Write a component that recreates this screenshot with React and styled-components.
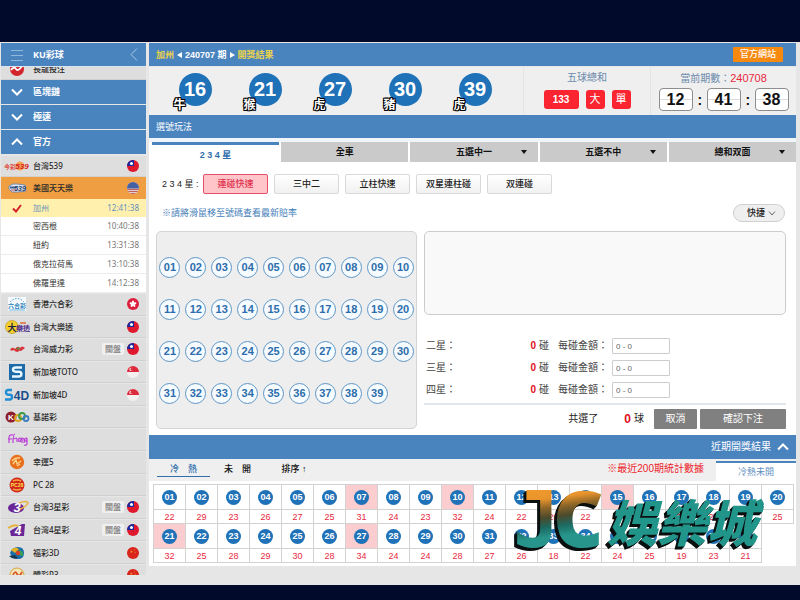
import React from "react";
import styled, { createGlobalStyle, css } from "styled-components";

const BLUE = "#4a84bf";
const DEEP = "#1f72b8";
const RED = "#e8283c";
const CJK = '"Noto Sans CJK TC", sans-serif';

const GlobalStyle = createGlobalStyle`
  * { box-sizing: border-box; }
  body {
    margin: 0;
    background: #020a2c;
    color: #222;
    font: 9px/12px "Liberation Sans", ${CJK};
  }
  button, input, select { font: inherit; color: inherit; margin: 0; }
  button { padding: 0; border: 0; background: none; cursor: pointer; }
  a { color: inherit; text-decoration: none; }
`;

const Shell = styled.div`
  min-height: 100vh;
  display: grid;
  grid-template-columns: 146px minmax(0, 1fr);
  column-gap: 3px;
  padding: 0 4px 0 0;
  border: solid #020a2c;
  border-width: 42px 0 15px;
  background: #e6e6e6;
  overflow: hidden;
`;

/* ---------- Sidebar ---------- */

const Sidebar = styled.nav`
  display: flex;
  flex-direction: column;
  padding: 1px 0 10px 1px;
  font: 8px/12px "Noto Sans", ${CJK};
`;

const SideHeader = styled.header`
  height: 24px;
  display: grid;
  grid-template-columns: 32px 1fr 24px;
  align-items: center;
  background: ${BLUE};
  border-bottom: 1px solid #d8e4f0;
  color: #fff;
  font-size: 9px;
  font-weight: 700;
`;

const IconButton = styled.button`
  display: flex;
  justify-content: center;
  align-items: center;
`;

const ClippedRow = styled.div`
  height: 13px;
  display: flex;
  align-items: flex-end;
  overflow: hidden;
`;

const Section = styled.button`
  height: 24px;
  margin-bottom: 1px;
  flex: none;
  display: grid;
  grid-template-columns: 32px 1fr;
  align-items: center;
  background: ${BLUE};
  color: #fff;
  font-size: 9px;
  font-weight: 700;
  text-align: left;
  & > svg { justify-self: center; }
`;

const GameLink = styled.a`
  flex: ${(p) => (p.$fluid ? "1 1 22px" : "0 0 22px")};
  display: grid;
  grid-template-columns: 32px 1fr auto 12px;
  align-items: center;
  padding-right: 7px;
  background: ${(p) => (p.$active ? "#ef9f41" : "#dedede")};
  border-bottom: 1px solid ${(p) => (p.$active ? "#ef9f41" : "#d0d0d0")};
  border-top: 1px solid ${(p) => (p.$active ? "#ef9f41" : "#e6e6e6")};
  color: #2a2a2a;
  font-weight: 500;
  white-space: nowrap;
  & > svg:first-child { justify-self: center; }
  ${ClippedRow} & { flex: 1 0 100%; height: 22px; }
`;

const Closed = styled.span`
  grid-column: 3;
  width: 22px;
  margin-right: 3px;
  border-radius: 2px;
  background: #efefef;
  color: #777;
  text-align: center;
`;

const FlagCell = styled.span`
  grid-column: 4;
  display: flex;
`;

const RegionLink = styled.a`
  flex: none;
  height: ${(p) => (p.$active ? 18 : 19)}px;
  display: grid;
  grid-template-columns: 32px 1fr auto;
  align-items: center;
  padding-right: 7px;
  background: ${(p) => (p.$active ? "#fff0ad" : "#fff")};
  border-bottom: ${(p) => (p.$active ? "0" : "1px solid #ececec")};
  color: ${(p) => (p.$active ? "#5f91bd" : "#333")};
  & > svg { justify-self: center; }
  & > span { grid-column: 2; }
`;

const Clock = styled.time`
  color: ${(p) => (p.$active ? "#5f91bd" : "#777")};
`;

const GameList = styled.div`
  flex: 1 1 0;
  display: flex;
  flex-direction: column;
  overflow: hidden;
`;

const LastRow = styled.div`
  flex: 0 0 11px;
  display: flex;
  flex-direction: column;
  overflow: hidden;
`;

/* ---------- Main column ---------- */

const Main = styled.main`
  min-width: 0;
  padding-top: 1px;
`;

const Bar = styled.div`
  height: 23px;
  display: flex;
  align-items: center;
  padding: 0 7px;
  background: ${BLUE};
  color: #fff;
`;

const DrawBar = styled(Bar)`
  margin-bottom: 1px;
  gap: 3px;
  padding-right: 13px;
  font-weight: 700;
`;

const Gold = styled.span`
  color: #ead24c;
`;

const StepButton = styled.button`
  width: 5px;
  height: 12px;
  display: flex;
  align-items: center;
`;

const OfficialLink = styled.a`
  margin-left: auto;
  padding: 1px 7px 2px;
  background: #f7890f;
  border-radius: 1px;
  font-weight: 500;
`;

const Results = styled.section`
  height: 48px;
  display: grid;
  grid-template-columns: 374fr 127fr 146fr;
  background: #efefef;
`;

const Draw = styled.div`
  display: flex;
  padding: 6px 13px 0 11px;
`;

const DrawSlot = styled.div`
  flex: 1;
  display: flex;
  justify-content: center;
`;

const DrawBall = styled.div`
  position: relative;
  width: 33px;
  height: 33px;
  border-radius: 50%;
  background: ${DEEP};
  color: #fff;
  font-size: 20px;
  line-height: 33px;
  font-weight: 700;
  text-align: center;
`;

const Zodiac = styled.span`
  position: absolute;
  left: -5px;
  bottom: -5px;
  color: #fff;
  font: 700 12px/14px ${CJK};
  text-shadow: 1px 0 #000, -1px 0 #000, 0 1px #000, 0 -1px #000, 1px 1px #000,
    -1px -1px #000, 1px -1px #000, -1px 1px #000;
`;

const InfoCell = styled.div`
  border-left: 1px solid #e4e4e4;
  padding-top: 4px;
  display: flex;
  flex-direction: column;
  align-items: center;
  gap: ${(p) => p.$gap}px;
  color: #6c8aab;
  font-size: 10px;
  line-height: 14px;
`;

const Line = styled.div`
  display: flex;
  align-items: center;
  gap: ${(p) => p.$gap}px;
`;

const SumTag = styled.span`
  width: ${(p) => (p.$wide ? 35 : 19)}px;
  height: 19px;
  border-radius: 3px;
  background: #fb2531;
  color: #fff;
  font-size: ${(p) => (p.$wide ? 10 : 11)}px;
  line-height: 19px;
  font-weight: ${(p) => (p.$wide ? 700 : 400)};
  text-align: center;
`;

const Issue = styled.span`
  color: ${RED};
  font-size: 11px;
`;

const TimeBox = styled.span`
  width: 34px;
  height: 23px;
  border: 1px solid #8d8d8d;
  border-radius: 4px;
  background: linear-gradient(#fff 10px, #ddd 10px, #ddd 11px, #fff 11px);
  color: #111;
  font-size: 16px;
  line-height: 22px;
  font-weight: 700;
  text-align: center;
`;

const Colon = styled.span`
  width: 4px;
  color: #111;
  font-size: 14px;
  font-weight: 700;
`;

const Play = styled.section`
  border-top: 4px solid #eff5f8;
  background: #fff;
`;

const Tabs = styled.div`
  display: grid;
  grid-template-columns: repeat(5, 1fr);
  column-gap: 2px;
  padding-left: 3px;
  font-weight: 700;
`;

const tabFace = css`
  width: 100%;
  height: 20px;
  background: #cacaca;
  color: #111;
`;

const Tab = styled.button`
  ${tabFace}
  ${(p) =>
    p.$active &&
    css`
      background: #fff;
      border-top: 3px solid ${BLUE};
      padding-top: 2px;
      color: #2f6fae;
    `}
`;

const TabMenu = styled.label`
  display: grid;
  align-items: center;
  & > * { grid-area: 1 / 1; }
  & > svg { justify-self: end; margin-right: 11px; pointer-events: none; }
`;

const TabSelect = styled.select`
  ${tabFace}
  appearance: none;
  border: 0;
  padding: 0;
  text-align: center;
  text-align-last: center;
`;

const Modes = styled.div`
  display: flex;
  align-items: center;
  gap: 6px;
  padding: 12px 10px 0 13px;
`;

const ModesLabel = styled.span`
  width: 35px;
  white-space: nowrap;
`;

const Mode = styled.button`
  width: 65px;
  height: 20px;
  border: 1px solid ${(p) => (p.$active ? "#e4506a" : "#d9d9d9")};
  border-radius: 2px;
  background: ${(p) => (p.$active ? "#ffc5c9" : "linear-gradient(#fff, #f1f1f1)")};
  color: ${(p) => (p.$active ? "#e0304c" : "#222")};
  font-weight: 500;
`;

const HintRow = styled.div`
  display: flex;
  justify-content: space-between;
  align-items: center;
  padding: 10px 11px 9px 13px;
  color: #3f7db8;
`;

const Quick = styled.label`
  width: 52px;
  display: grid;
  align-items: center;
  color: #222;
  & > * { grid-area: 1 / 1; }
  & > svg { justify-self: end; margin-right: 9px; pointer-events: none; }
`;

const QuickSelect = styled.select`
  appearance: none;
  height: 18px;
  padding: 0 0 0 13px;
  border: 1px solid #d0d0d0;
  border-radius: 9px;
  background: #efefef;
  font-weight: 500;
`;

const Boards = styled.div`
  display: grid;
  grid-template-columns: 261fr 362fr;
  column-gap: 7px;
  padding: 0 10px 6px 7px;
`;

const NumberBoard = styled.div`
  display: grid;
  grid-template-columns: repeat(10, 1fr);
  grid-auto-rows: 42px;
  place-items: center;
  padding: 14px 0;
  border: 1px solid #d4d4d4;
  border-radius: 5px;
  background: #eee;
`;

const NumberBall = styled.button`
  width: 21px;
  height: 21px;
  border: 1px solid #5f95c4;
  border-radius: 50%;
  background: #f5fbff;
  color: #2d6dab;
  font-size: 11px;
  line-height: 19px;
  font-weight: 700;
`;

const Slip = styled.form`
  display: flex;
  flex-direction: column;
  font-size: 10px;
  color: #444;
`;

const SlipBox = styled.div`
  height: 84px;
  margin-bottom: 20px;
  border: 1px solid #ccc;
  border-radius: 5px;
  background: #f9f9f9;
`;

const BetRow = styled.div`
  height: 22px;
  display: grid;
  grid-template-columns: 112px 16px 51px 58px;
  column-gap: 3px;
  align-items: center;
  white-space: nowrap;
`;

const StarCell = styled.span`
  display: flex;
  justify-content: space-between;
  padding-left: 2px;
`;

const Count = styled.b`
  color: #e0101c;
  font-size: ${(p) => (p.$big ? 12 : 10)}px;
`;

const Amount = styled.input`
  width: 58px;
  height: 16px;
  padding: 0 3px;
  border: 1px solid #ccc;
  border-radius: 1px;
  background: #fff;
  font-size: 8px;
  &::placeholder { color: #666; opacity: 1; }
`;

const SlipFooter = styled.div`
  display: flex;
  align-items: center;
  justify-content: flex-end;
  margin-top: 2px;
  padding-top: 4px;
  border-top: 2px solid #e2e6e8;
  gap: 3px;
  color: #222;
`;

const Picked = styled.span`
  margin-right: 23px;
`;

const Ball = styled.span`
  margin-right: 7px;
`;

const Action = styled.button`
  width: ${(p) => (p.$wide ? 86 : 43)}px;
  height: 20px;
  border-radius: 1px;
  background: #808080;
  color: #fff;
`;

const RecentBar = styled.button`
  width: 100%;
  height: 24px;
  display: flex;
  justify-content: flex-end;
  align-items: center;
  gap: 6px;
  padding-right: 7px;
  background: ${BLUE};
  color: #fff;
  font-size: 10px;
`;

const Stats = styled.section`
  background: #fff;
  padding-bottom: 3px;
`;

const StatsHead = styled.div`
  height: 22px;
  margin-bottom: 3px;
  display: flex;
  background: #efefef;
`;

const StatTab = styled.button`
  align-self: flex-start;
  width: ${(p) => p.$width}px;
  height: 18px;
  padding-top: 3px;
  margin-left: ${(p) => (p.$active ? 8 : 0)}px;
  border-bottom: 1px solid ${(p) => (p.$active ? "#2f6fae" : "transparent")};
  color: ${(p) => (p.$active ? "#2f6fae" : "#111")};
  font-weight: 500;
`;

const StatsNote = styled.span`
  margin: 4px 12px 0 auto;
  color: #ee1c2c;
  font-size: 10px;
`;

const ViewTab = styled.button`
  width: 80px;
  border-top: 2px solid ${BLUE};
  margin-top: 2px;
  background: #fff;
  color: #5f8fc0;
`;

const StatsTable = styled.table`
  width: calc(100% - 6px);
  margin: 0 2px 0 4px;
  border-collapse: collapse;
  table-layout: fixed;
  text-align: center;
  color: ${RED};
`;

const BallCell = styled.th`
  height: 25px;
  padding: 0;
  border: 1px solid #d2d2d2;
  background: ${(p) => (p.$hot ? "#fbcdce" : "#fff")};
`;

const CountCell = styled.td`
  height: 14px;
  padding: 0;
  border: 1px solid #d2d2d2;
`;

const SmallBall = styled.span`
  display: block;
  width: 15px;
  height: 15px;
  margin: 0 auto;
  border-radius: 50%;
  background: ${DEEP};
  color: #fff;
  line-height: 15px;
`;

const Watermark = styled.svg`
  position: absolute;
  left: 514px;
  top: 476px;
  width: 262px;
  height: 100px;
  pointer-events: none;
  & > text {
    filter: drop-shadow(-1px 1px 0 #0a0f10) drop-shadow(-2px 2px 0 #0a0f10);
  }
`;

/* ---------- Drawings ---------- */

const Chevron = ({ d, w = 12, h = 8, sw = 2, color = "#fff" }) => (
  <svg width={w} height={h} viewBox={`0 0 ${w} ${h}`} fill="none" stroke={color} strokeWidth={sw} aria-hidden="true">
    <path d={d} />
  </svg>
);
const Down = () => <Chevron d="M1 1.5 6 6.5 11 1.5" />;
const Up = () => <Chevron d="M1 6.5 6 1.5 11 6.5" />;

const Triangle = ({ d, w, h, color }) => (
  <svg width={w} height={h} viewBox={`0 0 ${w} ${h}`} aria-hidden="true"><path d={d} fill={color} /></svg>
);
const Caret = () => <Triangle w={6} h={4} d="M0 0h6L3 4z" color="#111" />;

const Flag = ({ code }) => {
  const id = React.useId();
  const star = "M0-1 .25-.3 1-.3 .4.15 .6.9 0 .45-.6.9-.4.15-1-.3-.25-.3z";
  const art = {
    tw: <><path fill="#e0182d" d="M0 0h12v12H0z" /><path fill="#1b2a9c" d="M0 0h7v6H0z" /><circle cx="4.5" cy="3.6" r="1.5" fill="#fff" /></>,
    us: <><path fill="#e6cdd0" d="M0 0h12v12H0z" /><path stroke="#c0605a" d="M0 7.5h12M0 9.5h12M0 11.500h12" /><path fill="#4660a4" d="M0 0h12v6.500H0z" /></>,
    hk: <><path fill="#dc1f3c" d="M0 0h12v12H0z" /><g fill="#fff">{[0, 72, 144, 216, 288].map((r) => <ellipse key={r} cx="6" cy="4.2" rx="1.1" ry="1.7" transform={`rotate(${r} 6 6)`} />)}</g></>,
    sg: <><path fill="#f4f0f0" d="M0 0h12v12H0z" /><path fill="#dc2a3c" d="M0 0h12v6H0z" /><circle cx="4" cy="3.4" r="1.6" fill="#fff" /><circle cx="4.8" cy="3.4" r="1.4" fill="#dc2a3c" /></>,
    cn: <><path fill="#d9251c" d="M0 0h12v12H0z" /><path d={star} fill="#f0a02a" transform="translate(4.4 4.6) scale(1.5)" /><circle cx="7.6" cy="3" r=".5" fill="#f0a02a" /><circle cx="8.2" cy="5.4" r=".5" fill="#f0a02a" /></>,
  };
  return (
    <svg width="12" height="12" viewBox="0 0 12 12" aria-hidden="true">
      <clipPath id={id}><circle cx="6" cy="6" r="6" /></clipPath>
      <g clipPath={`url(#${id})`}>{art[code]}</g>
    </svg>
  );
};

const logoText = { fontFamily: "Liberation Sans, Noto Sans CJK TC", fontWeight: 700, textAnchor: "middle" };
const logos = {
  dragon: <><circle cx="13" cy="8" r="7" fill="#d3262c" /><path d="M7 9q3-4 5-1t6-3" stroke="#fff" strokeWidth="1.8" fill="none" /></>,
  t539: <><text x="6" y="11" fontSize="6" fill="#e0483a" {...logoText}>今彩</text><circle cx="16" cy="8" r="4.500" fill="#f3a25a" /><text x="18" y="11" fontSize="8" fontStyle="italic" fill="#d8281f" {...logoText}>539</text></>,
  us539: <><path d="M5 6q4-3 8-2l8 1 1 6-8 1H8l-3-3z" fill="#dfe6f0" stroke="#5d7cab" strokeWidth=".8" /><path d="M6 6.500h6v2H6z" fill="#3b5c95" /><path d="M7 10h6" stroke="#c8555a" /><text x="16" y="11" fontSize="7" fontStyle="italic" fill="#27436e" {...logoText}>539</text></>,
  six: <><path fill="#f7fafc" d="M4 1h18v14H4z" /><path d="M6 6q7-7 14 0" fill="none" stroke="#3a8fc4" strokeDasharray="1.5 1.5" /><text x="13" y="12" fontSize="6" fill="#2d83bb" {...logoText}>六合彩</text><path d="M5 14h16" stroke="#6fb5db" /></>,
  lotto: <><circle cx="8" cy="8" r="6.5" fill="#f4cf2b" stroke="#b08d17" strokeWidth=".6" /><text x="8" y="12" fontSize="9" fill="#1c2440" {...logoText}>大</text><text x="19" y="12" fontSize="7" fill="#4a1f86" {...logoText}>樂透</text><path d="M16 4h6" stroke="#e06a30" strokeWidth="1.5" /></>,
  power: <><path d="M6 9q2-4 5-1 3-4 5-1 2-3 5 0l-4 3q-2-1-3 1-3 0-4-2-2 1-4 0z" fill="#d9343c" /><path d="M12 8l3-2 1 3z" fill="#4f9a45" /></>,
  toto: <><path fill="#1d6aa8" d="M5 0h16v16H5z" /><path d="M18 3.5h-6q-3 0-3 2t3 2.2h3q2.400 0 2.400 2.300t-2.400 2.500H8" fill="none" stroke="#e8f6ff" strokeWidth="2.400" /></>,
  s4d: <><path d="M8 3H4Q2 3 2 5.300T4 7.700h2q2 0 2 2.200T6 12.500H1" fill="none" stroke="#1f8fd6" strokeWidth="2.400" /><text x="17.500" y="12.500" fontSize="12" fill="#1b4f8c" {...logoText}>4D</text></>,
  keno: <><circle cx="7" cy="8" r="5.500" fill="#8d1f2d" /><text x="7" y="11" fontSize="8" fill="#fff" {...logoText}>K</text><circle cx="14" cy="9" r="3" fill="none" stroke="#e0a321" strokeWidth="1.800" /><circle cx="18" cy="7" r="3" fill="none" stroke="#3d9a4a" strokeWidth="1.800" /><circle cx="22" cy="9.500" r="2.500" fill="none" stroke="#3b7dc2" strokeWidth="1.800" /></>,
  ffc: <path d="M9 3q-4-1-4 3v5M4 7h4M11 2q-2 0-2 9M10 7q3-2 3 0v3M15 10q-1-4 1-4t0 4M18 11V6q3 0 2 5M23 6q-3 0-2 3 2 1 2-3v6q-1 2-3 1" fill="none" stroke="#b93fd6" strokeWidth="1.200" />,
  lucky: <><circle cx="13" cy="8" r="7.200" fill="#e8701d" /><path d="M8 7q3-4 8-3M9 10l3-4 1 4 4-3M13 12l3-2" stroke="#ffd48a" strokeWidth="1.300" fill="none" /></>,
  pc28: <><circle cx="13" cy="8" r="7.500" fill="#d0261d" /><path d="M9 4q4-2 8 0M9 12q4 2 8 0" stroke="#f5a33a" strokeWidth="1.500" fill="none" /><text x="13" y="10" fontSize="5" fill="#ffe24a" {...logoText}>PC28</text></>,
  star3: <><ellipse cx="12" cy="9" rx="8" ry="5" fill="#6a2596" /><path d="M15 4q8-3 9 0-2 4-8 6" fill="none" stroke="#e8b23e" strokeWidth="1.500" /><text x="13" y="12.500" fontSize="13" fontStyle="italic" fill="#fff" {...logoText}>3</text></>,
  star4: <><path d="M6 9 18 2h3l-1 12H7z" fill="#6a2596" /><path d="M4 6q8-5 11-1" fill="none" stroke="#e8b23e" strokeWidth="1.800" /><text x="14" y="13" fontSize="12" fontStyle="italic" fill="#fff" {...logoText}>4</text></>,
  fc3d: <><path d="M6 8q2-6 8-6t6 6-6 6-8-6z" fill="#1b6fa8" /><path d="M7 5q4-4 8-1l-4 4z" fill="#e5b21d" /><path d="M15 5q5 1 4 6l-5-1z" fill="#39a05a" /><path d="M5 11q4 4 9 2l-3-3z" fill="#153a5a" /><circle cx="14" cy="8" r="2.200" fill="#d9402a" /></>,
  p3: <><circle cx="13" cy="8" r="7" fill="#f2e6b8" stroke="#d3a53a" /><path d="M9 8q2-5 4-1t5-2" stroke="#d9582a" strokeWidth="1.800" fill="none" /></>,
};
const Logo = ({ name }) => (
  <svg width="26" height="16" viewBox="0 0 26 16" aria-hidden="true">{logos[name]}</svg>
);

const Brand = () => (
  <Watermark viewBox="0 0 262 100" role="img" aria-label="JC 娛樂城">
    <defs>
      <linearGradient id="jc" x1="0" y1="15" x2="8" y2="74" gradientUnits="userSpaceOnUse">
        <stop offset="0" stopColor="#f09a2c" />
        <stop offset=".2" stopColor="#e8942c" />
        <stop offset=".36" stopColor="#8a6428" />
        <stop offset=".52" stopColor="#4a4a2c" />
        <stop offset=".68" stopColor="#1c6a62" />
        <stop offset=".85" stopColor="#27958b" />
      </linearGradient>
    </defs>
    <text x="-1" y="71" fill="url(#jc)" fontFamily="DejaVu Sans Mono" fontWeight="700" fontSize="78">J</text>
    <text x="39" y="71" fill="url(#jc)" fontFamily="Open Sans" fontWeight="800" fontSize="78">C</text>
    <text x="93" y="66" fill="#22958b" fontFamily="Noto Sans CJK TC" fontWeight="900" fontSize="50" fontStyle="italic">
      娛樂城
    </text>
  </Watermark>
);

/* ---------- Data ---------- */

const regions = [
  ["加州", "12:41:38"], ["密西根", "10:40:38"], ["紐約", "13:31:38"],
  ["俄克拉荷馬", "13:10:38"], ["佛羅里達", "14:12:38"],
];
const games = [
  ["six", "香港六合彩", "hk"], ["lotto", "台灣大樂透", "tw"], ["power", "台灣威力彩", "tw", true],
  ["toto", "新加坡TOTO", "sg"], ["s4d", "新加坡4D", "sg"], ["keno", "基諾彩"], ["ffc", "分分彩"],
  ["lucky", "幸運5"], ["pc28", "PC 28"], ["star3", "台灣3星彩", "tw", true],
  ["star4", "台灣4星彩", "tw", true], ["fc3d", "福彩3D", "cn"],
];
const draws = [["16", "牛"], ["21", "猴"], ["27", "虎"], ["30", "豬"], ["39", "虎"]];
const modes = ["連碰快速", "三中二", "立柱快速", "双星連柱碰", "双連碰"];
const counts = [
  [22, 29, 23, 26, 27, 25, 31, 24, 23, 32, 24, 22, 20, 22, 31, 24, 27, 24, 22, 25],
  [32, 25, 28, 29, 30, 28, 34, 24, 24, 28, 27, 26, 18, 22, 24, 25, 19, 23, 21],
];
const hot = [7, 10, 15, 21, 27];
const pad = (n) => String(n).padStart(2, "0");

const Game = ({ logo, name, flag, closed, active, fluid }) => (
  <GameLink href="#" $active={active} $fluid={fluid}>
    <Logo name={logo} />
    <span>{name}</span>
    {closed && <Closed>關盤</Closed>}
    {flag && <FlagCell><Flag code={flag} /></FlagCell>}
  </GameLink>
);

export default function App() {
  return (
    <Shell>
      <GlobalStyle />
      <Sidebar>
        <SideHeader>
          <IconButton aria-label="選單"><Chevron w={12} h={12} sw={1} color="#8fb8dc" d="M0 1.500h12M0 6.500h12M0 11.500h12" /></IconButton>
          <span>KU彩球</span>
          <IconButton aria-label="收合"><Chevron w={8} h={13} sw={1} color="#a9c9e6" d="M7 .5 1 6.500 7 12.500" /></IconButton>
        </SideHeader>
        <ClippedRow><Game logo="dragon" name="長龍投注" /></ClippedRow>
        <Section><Down />區塊鏈</Section>
        <Section><Down />極速</Section>
        <Section><Up />官方</Section>
        <Game logo="t539" name="台灣539" flag="tw" />
        <Game logo="us539" name="美國天天樂" flag="us" active />
        {regions.map(([name, time], i) => (
          <RegionLink key={name} href="#" $active={i === 0}>
            {i === 0 && <Chevron w={10} h={9} color="#d3202a" d="M1 4.500 4 7.500 9 1" />}
            <span>{name}</span>
            <Clock $active={i === 0}>{time}</Clock>
          </RegionLink>
        ))}
        <GameList>
          {games.map(([logo, name, flag, closed]) => (
            <Game key={name} logo={logo} name={name} flag={flag} closed={closed} fluid />
          ))}
          <LastRow><Game logo="p3" name="體彩P3" flag="cn" /></LastRow>
        </GameList>
      </Sidebar>

      <Main>
        <DrawBar>
          <Gold>加州</Gold>
          <StepButton aria-label="上一期"><Triangle w={5} h={6} d="M5 0v6L0 3z" color="#fff" /></StepButton>
          <span>240707 期</span>
          <StepButton aria-label="下一期"><Triangle w={5} h={6} d="M0 0v6l5-3z" color="#fff" /></StepButton>
          <Gold>開獎結果</Gold>
          <OfficialLink href="#">官方網站</OfficialLink>
        </DrawBar>

        <Results>
          <Draw>
            {draws.map(([n, z]) => (
              <DrawSlot key={n}><DrawBall>{n}<Zodiac>{z}</Zodiac></DrawBall></DrawSlot>
            ))}
          </Draw>
          <InfoCell $gap={5}>
            <span>五球總和</span>
            <Line $gap={7}><SumTag $wide>133</SumTag><SumTag>大</SumTag><SumTag>單</SumTag></Line>
          </InfoCell>
          <InfoCell $gap={2}>
            <span>當前期數：<Issue>240708</Issue></span>
            <Line $gap={5}>
              <TimeBox>12</TimeBox><Colon>:</Colon><TimeBox>41</TimeBox><Colon>:</Colon><TimeBox>38</TimeBox>
            </Line>
          </InfoCell>
        </Results>

        <Bar>選號玩法</Bar>

        <Play>
          <Tabs>
            <Tab $active>2 3 4 星</Tab>
            <Tab>全車</Tab>
            {["五選中一", "五選不中", "總和双面"].map((t) => (
              <TabMenu key={t}>
                <TabSelect aria-label={t}><option>{t}</option></TabSelect>
                <Caret />
              </TabMenu>
            ))}
          </Tabs>
          <Modes>
            <ModesLabel>2 3 4 星 :</ModesLabel>
            {modes.map((m, i) => <Mode key={m} $active={i === 0}>{m}</Mode>)}
          </Modes>
          <HintRow>
            <span>※請將滑鼠移至號碼查看最新賠率</span>
            <Quick>
              <QuickSelect aria-label="快捷"><option>快捷</option></QuickSelect>
              <Chevron w={8} h={5} sw={1} color="#666" d="M1 .5 4 4 7 .5" />
            </Quick>
          </HintRow>
          <Boards>
            <NumberBoard>
              {Array.from({ length: 39 }, (_, i) => <NumberBall key={i}>{pad(i + 1)}</NumberBall>)}
            </NumberBoard>
            <Slip onSubmit={(e) => e.preventDefault()}>
              <SlipBox />
              {["二星", "三星", "四星"].map((s, i) => (
                <BetRow key={s}>
                  <StarCell><span>{s}：</span><Count>0</Count></StarCell>
                  <span>碰</span>
                  <label htmlFor={`bet${i}`}>每碰金額：</label>
                  <Amount id={`bet${i}`} placeholder="0 - 0" />
                </BetRow>
              ))}
              <SlipFooter>
                <Picked>共選了</Picked>
                <Count $big>0</Count>
                <Ball>球</Ball>
                <Action type="reset">取消</Action>
                <Action type="submit" $wide>確認下注</Action>
              </SlipFooter>
            </Slip>
          </Boards>
        </Play>

        <RecentBar>近期開獎結果<Up /></RecentBar>
        <Stats>
          <StatsHead>
            <StatTab $width={53} $active>冷　熱</StatTab>
            <StatTab $width={55}>未　開</StatTab>
            <StatTab $width={58}>排序 ↑</StatTab>
            <StatsNote>※最近200期統計數據</StatsNote>
            <ViewTab>冷熱未開</ViewTab>
          </StatsHead>
          <StatsTable>
            <tbody>
              {counts.map((row, r) => (
                <React.Fragment key={r}>
                  <tr>
                    {row.map((_, i) => {
                      const n = r * 20 + i + 1;
                      return <BallCell key={n} scope="col" $hot={hot.includes(n)}><SmallBall>{pad(n)}</SmallBall></BallCell>;
                    })}
                  </tr>
                  <tr>{row.map((c, i) => <CountCell key={i}>{c}</CountCell>)}</tr>
                </React.Fragment>
              ))}
            </tbody>
          </StatsTable>
        </Stats>
      </Main>
      <Brand />
    </Shell>
  );
}
